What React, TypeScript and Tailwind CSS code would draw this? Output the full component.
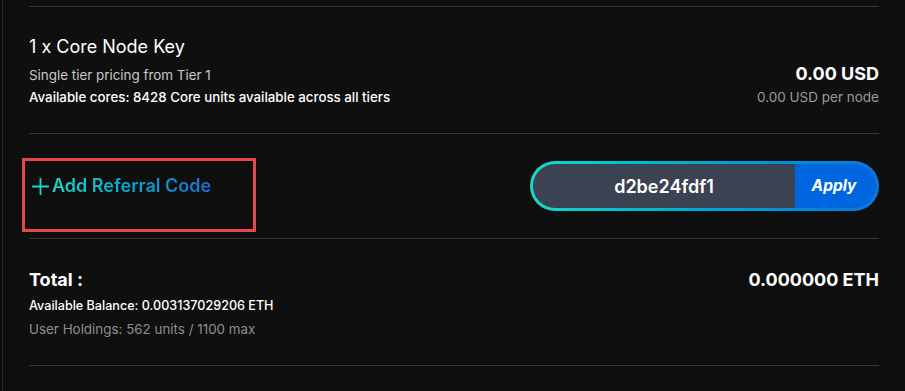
import { useState } from "react";

function PlusIcon() {
  return (
    <svg width="17" height="17" viewBox="0 0 17 17" fill="none" className="shrink-0">
      <path d="M8.5 0.5v16M0.5 8.5h16" stroke="#1fd8c2" strokeWidth="1.8" strokeLinecap="round" />
    </svg>
  );
}

export default function App() {
  const [code, setCode] = useState("d2be24fdf1");

  return (
    <div className="min-h-[391px] w-full bg-[#0c0c0c] font-['Inter',sans-serif] text-white">
      <div className="ml-[2px] min-h-[391px] border-l border-[#2a2a2a] bg-[#0f0f0f] pl-[26px] pr-[26px] pt-[6px]">
        <div className="h-px bg-[#383838]" />

        {/* order summary */}
        <div className="flex items-end justify-between pb-[28px] pt-[28px]">
          <div className="flex flex-col">
            <h3 className="text-[18px] leading-[24px] text-white">1 x Core Node Key</h3>
            <p className="mt-[8px] text-[13.4px] leading-[16px] text-[#c9c9c9]">Single tier pricing from Tier 1</p>
            <p className="mt-[6px] text-[13.3px] font-medium leading-[16px] text-white">
              Available cores: 8428 Core units available across all tiers
            </p>
          </div>
          <div className="flex flex-col items-end">
            <span className="text-[18px] font-bold leading-[24px]">0.00 USD</span>
            <span className="mt-[3px] text-[13.5px] leading-[16px] text-[#9b9b9b]">0.00 USD per node</span>
          </div>
        </div>

        <div className="h-px bg-[#383838]" />

        {/* referral */}
        <div className="flex items-start justify-between pb-[6px] pt-[24px]">
          <div className="-ml-[7px] h-[74px] w-[234px] border-[3px] border-[#e5484d] pl-[7px] pt-[13px]">
            <button type="button" className="flex items-center gap-[3px]">
              <PlusIcon />
              <span className="bg-gradient-to-r from-[#1fd8c2] to-[#1a6fd8] bg-clip-text text-[18px] font-semibold leading-[24px] text-transparent">
                Add Referral Code
              </span>
            </button>
          </div>

          <div className="mt-[3px] h-[50px] w-[349px] rounded-full bg-gradient-to-r from-[#1ad9c6] to-[#0f74dc] p-[3px]">
            <div className="flex h-full overflow-hidden rounded-full">
              <input
                value={code}
                onChange={(e) => setCode(e.target.value)}
                aria-label="Referral code"
                className="min-w-0 flex-1 bg-[#3b4252] text-center text-[18px] font-semibold text-white outline-none"
              />
              <button
                type="button"
                className="w-[81px] bg-[#0066e0] pr-[3px] text-[15.5px] font-bold italic text-white"
              >
                Apply
              </button>
            </div>
          </div>
        </div>

        <div className="h-px bg-[#383838]" />

        {/* total */}
        <div className="flex items-start justify-between pb-[28px] pt-[29px]">
          <div className="flex flex-col">
            <h3 className="text-[18px] font-bold leading-[24px]">Total :</h3>
            <p className="mt-[6px] text-[12.6px] font-medium leading-[16px] text-white">
              Available Balance: 0.003137029206 ETH
            </p>
            <p className="mt-[7px] text-[13.4px] leading-[16px] text-[#8b8e94]">User Holdings: 562 units / 1100 max</p>
          </div>
          <span className="text-[18px] font-bold leading-[24px]">0.000000 ETH</span>
        </div>

        <div className="h-px bg-[#383838]" />
      </div>
    </div>
  );
}
